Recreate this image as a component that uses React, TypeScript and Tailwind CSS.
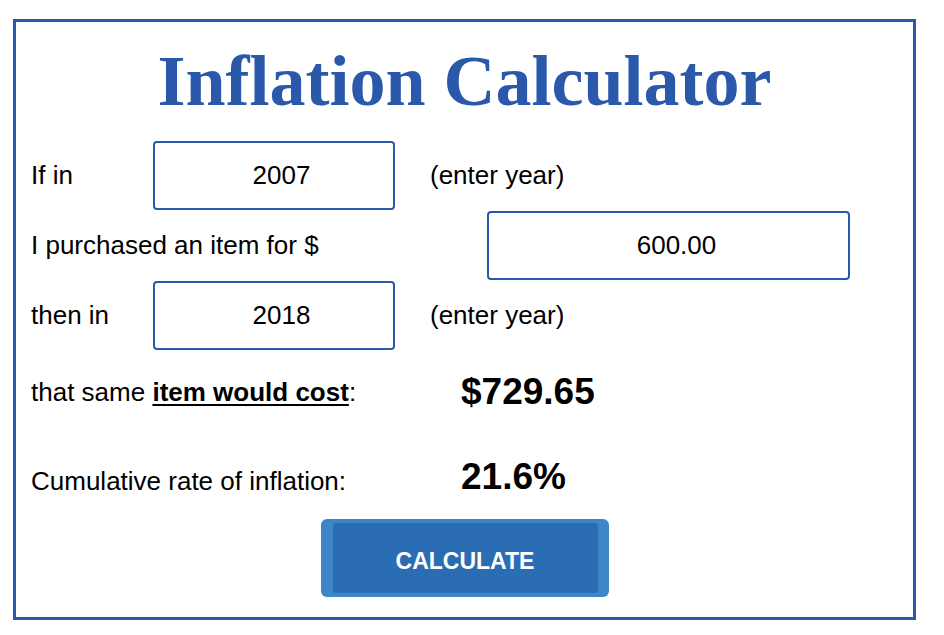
import React from 'react';

const blue = 'border-[#2b59a9]';

function YearRow({ label, year }: { label: string; year: string }) {
  return (
    <div className="flex h-[70px] items-center pl-[15px]">
      <span className="w-[122px]">{label}</span>
      <input
        readOnly
        value={year}
        className={`h-[69px] w-[242px] rounded-[4px] border-2 ${blue} bg-white pl-[15px] text-center text-[26px] text-black outline-none`}
      />
      <span className="ml-[35px]">(enter year)</span>
    </div>
  );
}

export default function App() {
  return (
    <div className="min-h-screen bg-white pl-[13px] pt-[19px] font-['Liberation_Sans',Arial,sans-serif] text-[26px] text-black">
      <div className={`flex h-[601px] w-[903px] flex-col border-[3px] ${blue} bg-white`}>
        <h1 className="h-[118px] pt-[18px] text-center font-['Liberation_Serif','Times_New_Roman',serif] text-[72px] font-bold leading-[83px] text-[#2a58aa]">
          Inflation Calculator
        </h1>

        <YearRow label="If in" year="2007" />

        <div className="flex h-[70px] items-center pl-[15px]">
          <span className="w-[456px]">I purchased an item for $</span>
          <input
            readOnly
            value="600.00"
            className={`h-[69px] w-[363px] rounded-[4px] border-2 ${blue} bg-white pl-[16px] text-center text-[26px] text-black outline-none`}
          />
        </div>

        <YearRow label="then in" year="2018" />

        <div className="flex h-[84px] items-center pl-[15px]">
          <span className="w-[430px]">
            that same{' '}
            <span className="font-bold underline decoration-2 underline-offset-[3px]">item would cost</span>:
          </span>
          <span className="text-[37px] font-bold leading-[42px]">$729.65</span>
        </div>

        <div className="flex h-[85px] items-center pl-[15px]">
          <span className="w-[430px] pt-[10px]">Cumulative rate of inflation:</span>
          <span className="text-[37px] font-bold leading-[42px]">21.6%</span>
        </div>

        <button className="mx-auto flex h-[78px] w-[288px] rounded-[6px] bg-[#3d86c8] pb-[4px] pl-[12px] pr-[11px] pt-[4px]">
          <span className="flex h-full w-full items-center justify-center rounded-[3px] bg-[#2a6db5] pt-[7px] text-[23px] font-bold text-white">
            CALCULATE
          </span>
        </button>
      </div>
    </div>
  );
}
